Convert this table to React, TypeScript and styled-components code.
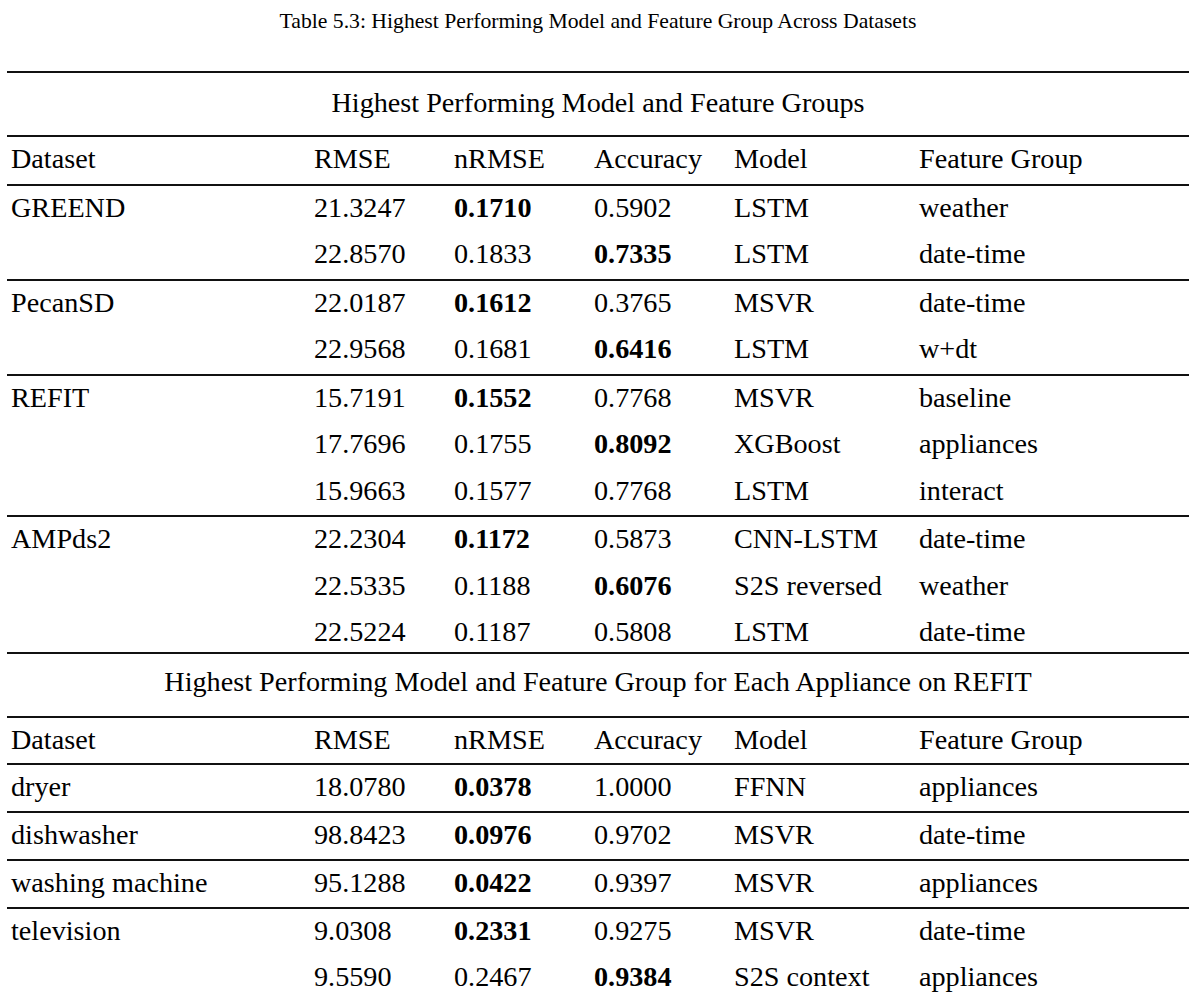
import React from "react";
import styled, { createGlobalStyle } from "styled-components";

const Global = createGlobalStyle`
  html, body {
    margin: 0;
    padding: 0;
    background: #ffffff;
    color: #000000;
    font-family: "Liberation Serif", "Times New Roman", serif;
  }
`;

const Page = styled.div`
  width: 1196px;
  display: flex;
  flex-direction: column;
  align-items: center;
`;

const Caption = styled.div`
  height: 71px;
  box-sizing: border-box;
  padding-top: 8px;
  font-size: 21.7px;
  line-height: 26px;
  text-align: center;
  width: 100%;
`;

const Table = styled.div`
  width: 1182px;
  display: flex;
  flex-direction: column;
  font-size: 28.2px;
`;

const Rule = styled.div`
  height: 2px;
  background: #111111;
`;

const TitleRow = styled.div<{ $top: number }>`
  height: 62px;
  box-sizing: border-box;
  padding-top: ${(p) => p.$top}px;
  text-align: center;
  line-height: 32px;
`;

const Row = styled.div<{ $h?: number }>`
  display: grid;
  grid-template-columns: 303px 140px 140px 140px 185px 1fr;
  height: ${(p) => p.$h ?? 46.5}px;
  align-items: start;
  box-sizing: border-box;
  padding-top: 6px;
  line-height: 32px;
`;

const Cell = styled.div<{ $bold?: boolean }>`
  padding-left: 4px;
  white-space: nowrap;
  font-weight: ${(p) => (p.$bold ? 700 : 400)};
`;

type Line = {
  name?: string;
  rmse: string;
  nrmse: string;
  acc: string;
  model: string;
  group: string;
  bold: "nrmse" | "acc" | "none";
};

const datasets: Line[][] = [
  [
    { name: "GREEND", rmse: "21.3247", nrmse: "0.1710", acc: "0.5902", model: "LSTM", group: "weather", bold: "nrmse" },
    { rmse: "22.8570", nrmse: "0.1833", acc: "0.7335", model: "LSTM", group: "date-time", bold: "acc" },
  ],
  [
    { name: "PecanSD", rmse: "22.0187", nrmse: "0.1612", acc: "0.3765", model: "MSVR", group: "date-time", bold: "nrmse" },
    { rmse: "22.9568", nrmse: "0.1681", acc: "0.6416", model: "LSTM", group: "w+dt", bold: "acc" },
  ],
  [
    { name: "REFIT", rmse: "15.7191", nrmse: "0.1552", acc: "0.7768", model: "MSVR", group: "baseline", bold: "nrmse" },
    { rmse: "17.7696", nrmse: "0.1755", acc: "0.8092", model: "XGBoost", group: "appliances", bold: "acc" },
    { rmse: "15.9663", nrmse: "0.1577", acc: "0.7768", model: "LSTM", group: "interact", bold: "none" },
  ],
  [
    { name: "AMPds2", rmse: "22.2304", nrmse: "0.1172", acc: "0.5873", model: "CNN-LSTM", group: "date-time", bold: "nrmse" },
    { rmse: "22.5335", nrmse: "0.1188", acc: "0.6076", model: "S2S reversed", group: "weather", bold: "acc" },
    { rmse: "22.5224", nrmse: "0.1187", acc: "0.5808", model: "LSTM", group: "date-time", bold: "none" },
  ],
];

const appliances: Line[][] = [
  [{ name: "dryer", rmse: "18.0780", nrmse: "0.0378", acc: "1.0000", model: "FFNN", group: "appliances", bold: "nrmse" }],
  [{ name: "dishwasher", rmse: "98.8423", nrmse: "0.0976", acc: "0.9702", model: "MSVR", group: "date-time", bold: "nrmse" }],
  [{ name: "washing machine", rmse: "95.1288", nrmse: "0.0422", acc: "0.9397", model: "MSVR", group: "appliances", bold: "nrmse" }],
  [
    { name: "television", rmse: "9.0308", nrmse: "0.2331", acc: "0.9275", model: "MSVR", group: "date-time", bold: "nrmse" },
    { rmse: "9.5590", nrmse: "0.2467", acc: "0.9384", model: "S2S context", group: "appliances", bold: "acc" },
  ],
];

const Header: React.FC<{ h?: number }> = ({ h }) => (
  <Row $h={h}>
    <Cell>Dataset</Cell>
    <Cell>RMSE</Cell>
    <Cell>nRMSE</Cell>
    <Cell>Accuracy</Cell>
    <Cell>Model</Cell>
    <Cell>Feature Group</Cell>
  </Row>
);

const DataRow: React.FC<{ line: Line; h?: number }> = ({ line, h }) => (
  <Row $h={h}>
    <Cell>{line.name ?? ""}</Cell>
    <Cell>{line.rmse}</Cell>
    <Cell $bold={line.bold === "nrmse"}>{line.nrmse}</Cell>
    <Cell $bold={line.bold === "acc"}>{line.acc}</Cell>
    <Cell>{line.model}</Cell>
    <Cell>{line.group}</Cell>
  </Row>
);

export default function App() {
  return (
    <>
      <Global />
      <Page>
        <Caption>Table 5.3: Highest Performing Model and Feature Group Across Datasets</Caption>
        <Table>
          <Rule />
          <TitleRow $top={14}>Highest Performing Model and Feature Groups</TitleRow>
          <Rule />
          <Header />
          {datasets.map((g, gi) => (
            <React.Fragment key={gi}>
              <Rule />
              {g.map((l, li) => (
                <DataRow
                  key={li}
                  line={l}
                  h={gi === datasets.length - 1 && li === g.length - 1 ? 42 : undefined}
                />
              ))}
            </React.Fragment>
          ))}
          <Rule />
          <TitleRow $top={12}>Highest Performing Model and Feature Group for Each Appliance on REFIT</TitleRow>
          <Rule />
          <Header h={45} />
          {appliances.map((g, gi) => (
            <React.Fragment key={gi}>
              <Rule />
              {g.map((l, li) => (
                <DataRow key={li} line={l} h={46} />
              ))}
            </React.Fragment>
          ))}
        </Table>
      </Page>
    </>
  );
}
